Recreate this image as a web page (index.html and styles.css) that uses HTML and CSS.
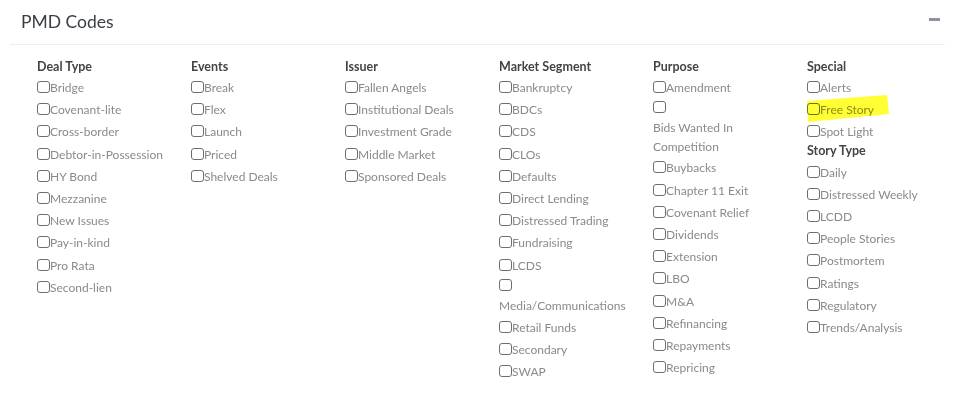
FILE: index.html
```html
<!doctype html>
<html>
<head>
<meta charset="UTF-8">
<title>PMD Codes</title>
<link rel="stylesheet" href="styles.css">
</head>
<body>
<div class="panel">
	<div class="panel_head">
		<h2 class="panel_title">PMD Codes</h2>
		<span class="btn_collapse"></span>
	</div>

	<div class="codes">
		<div class="col">
			<strong class="group">Deal Type</strong>
			<div class="item"><input type="checkbox"><label>Bridge</label></div>
			<div class="item"><input type="checkbox"><label>Covenant-lite</label></div>
			<div class="item"><input type="checkbox"><label>Cross-border</label></div>
			<div class="item"><input type="checkbox"><label>Debtor-in-Possession</label></div>
			<div class="item"><input type="checkbox"><label>HY Bond</label></div>
			<div class="item"><input type="checkbox"><label>Mezzanine</label></div>
			<div class="item"><input type="checkbox"><label>New Issues</label></div>
			<div class="item"><input type="checkbox"><label>Pay-in-kind</label></div>
			<div class="item"><input type="checkbox"><label>Pro Rata</label></div>
			<div class="item"><input type="checkbox"><label>Second-lien</label></div>
		</div>
		<div class="col">
			<strong class="group">Events</strong>
			<div class="item"><input type="checkbox"><label>Break</label></div>
			<div class="item"><input type="checkbox"><label>Flex</label></div>
			<div class="item"><input type="checkbox"><label>Launch</label></div>
			<div class="item"><input type="checkbox"><label>Priced</label></div>
			<div class="item"><input type="checkbox"><label>Shelved Deals</label></div>
		</div>
		<div class="col">
			<strong class="group">Issuer</strong>
			<div class="item"><input type="checkbox"><label>Fallen Angels</label></div>
			<div class="item"><input type="checkbox"><label>Institutional Deals</label></div>
			<div class="item"><input type="checkbox"><label>Investment Grade</label></div>
			<div class="item"><input type="checkbox"><label>Middle Market</label></div>
			<div class="item"><input type="checkbox"><label>Sponsored Deals</label></div>
		</div>
		<div class="col">
			<strong class="group">Market Segment</strong>
			<div class="item"><input type="checkbox"><label>Bankruptcy</label></div>
			<div class="item"><input type="checkbox"><label>BDCs</label></div>
			<div class="item"><input type="checkbox"><label>CDS</label></div>
			<div class="item"><input type="checkbox"><label>CLOs</label></div>
			<div class="item"><input type="checkbox"><label>Defaults</label></div>
			<div class="item"><input type="checkbox"><label>Direct Lending</label></div>
			<div class="item"><input type="checkbox"><label>Distressed Trading</label></div>
			<div class="item"><input type="checkbox"><label>Fundraising</label></div>
			<div class="item"><input type="checkbox"><label>LCDS</label></div>
			<div class="item long"><input type="checkbox"><label>Media/Communications</label></div>
			<div class="item"><input type="checkbox"><label>Retail Funds</label></div>
			<div class="item"><input type="checkbox"><label>Secondary</label></div>
			<div class="item"><input type="checkbox"><label>SWAP</label></div>
		</div>
		<div class="col">
			<strong class="group">Purpose</strong>
			<div class="item"><input type="checkbox"><label>Amendment</label></div>
			<div class="item long"><input type="checkbox"><label>Bids Wanted In Competition</label></div>
			<div class="item"><input type="checkbox"><label>Buybacks</label></div>
			<div class="item"><input type="checkbox"><label>Chapter 11 Exit</label></div>
			<div class="item"><input type="checkbox"><label>Covenant Relief</label></div>
			<div class="item"><input type="checkbox"><label>Dividends</label></div>
			<div class="item"><input type="checkbox"><label>Extension</label></div>
			<div class="item"><input type="checkbox"><label>LBO</label></div>
			<div class="item"><input type="checkbox"><label>M&amp;A</label></div>
			<div class="item"><input type="checkbox"><label>Refinancing</label></div>
			<div class="item"><input type="checkbox"><label>Repayments</label></div>
			<div class="item"><input type="checkbox"><label>Repricing</label></div>
		</div>
		<div class="col">
			<strong class="group">Special</strong>
			<div class="item"><input type="checkbox"><label>Alerts</label></div>
			<div class="item marked">
				<svg class="marker" width="84" height="30" viewBox="0 0 84 30"><polygon points="0,6 80,0 82,19 1,27" fill="#ffff33"/></svg>
				<input type="checkbox"><label>Free Story</label>
			</div>
			<div class="item"><input type="checkbox"><label>Spot Light</label></div>
			<strong class="group sub">Story Type</strong>
			<div class="item"><input type="checkbox"><label>Daily</label></div>
			<div class="item"><input type="checkbox"><label>Distressed Weekly</label></div>
			<div class="item"><input type="checkbox"><label>LCDD</label></div>
			<div class="item"><input type="checkbox"><label>People Stories</label></div>
			<div class="item"><input type="checkbox"><label>Postmortem</label></div>
			<div class="item"><input type="checkbox"><label>Ratings</label></div>
			<div class="item"><input type="checkbox"><label>Regulatory</label></div>
			<div class="item"><input type="checkbox"><label>Trends/Analysis</label></div>
		</div>
	</div>
</div>
</body>
</html>
```

FILE: styles.css
```css
body {
	margin: 0;
	background: #fff;
	font-family: "Lato", "Liberation Sans", sans-serif;
}
.panel {
	margin: 0 25px 0 10px;
}
.panel_head {
	display: flex;
	justify-content: space-between;
	align-items: center;
	height: 44px;
	border-bottom: 1px solid #eceef0;
}
.panel_title {
	margin: 0 0 2px 11px;
	font-size: 17.5px;
	font-weight: normal;
	color: #3a3f46;
}
.btn_collapse {
	width: 11px;
	height: 3px;
	margin: 0 5px 6px 0;
	background: #8c92a3;
}
.codes {
	display: grid;
	grid-template-columns: repeat(6, 128px);
	column-gap: 26px;
	padding: 12px 0 0 27px;
}
.group {
	display: block;
	line-height: 20px;
	margin-bottom: 1px;
	font-size: 12.5px;
	font-weight: bold;
	color: #444;
}
.group.sub {
	margin-top: -4px;
	margin-bottom: 2px;
}
.item {
	position: relative;
	line-height: 20px;
	margin-bottom: 2.2px;
	font-size: 12px;
	color: #8a8a8a;
}
.item.long {
	margin-top: -2px;
}
.item input {
	-webkit-appearance: none;
	appearance: none;
	box-sizing: border-box;
	width: 13px;
	height: 12px;
	margin: 0;
	border: 1px solid #6e6e6e;
	border-radius: 3px;
	background: #fff;
	vertical-align: -1px;
}
.item label {
	display: inline-block;
	max-width: 100%;
	line-height: 19px;
	vertical-align: top;
}
.marker {
	position: absolute;
	left: 0;
	top: -5px;
	mix-blend-mode: multiply;
	z-index: 1;
}
```
